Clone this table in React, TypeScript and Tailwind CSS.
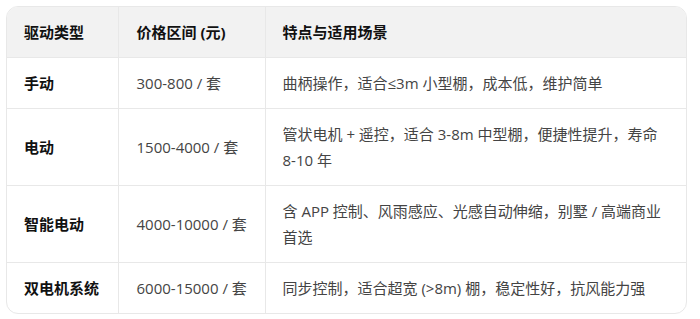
import React from 'react'

const ROWS = [
  { type: '手动', price: '300-800 / 套', desc: '曲柄操作，适合≤3m 小型棚，成本低，维护简单' },
  { type: '电动', price: '1500-4000 / 套', desc: '管状电机 + 遥控，适合 3-8m 中型棚，便捷性提升，寿命 8-10 年' },
  { type: '智能电动', price: '4000-10000 / 套', desc: '含 APP 控制、风雨感应、光感自动伸缩，别墅 / 高端商业首选' },
  { type: '双电机系统', price: '6000-15000 / 套', desc: '同步控制，适合超宽 (>8m) 棚，稳定性好，抗风能力强' },
]

export default function App() {
  return (
    <div
      className="w-[700px] h-[319px] bg-white pt-[6px] pl-[6px]"
      style={{ fontFamily: '"Open Sans", "Noto Sans CJK SC", sans-serif' }}
    >
      <div className="w-[681px] border border-[#e8e8e8] rounded-[12px] overflow-hidden">
        <table className="w-full table-fixed border-collapse text-[15px] leading-[26px]">
          <colgroup>
            <col className="w-[111px]" />
            <col className="w-[147px]" />
            <col />
          </colgroup>
          <thead>
            <tr className="bg-[#f2f2f2] text-[#111]">
              <th className="text-left font-bold pl-[17px] pr-[8px] py-[12px]">驱动类型</th>
              <th className="text-left font-bold pl-[18px] pr-[8px] py-[12px] border-l border-[#e8e8e8]">价格区间 (元)</th>
              <th className="text-left font-bold px-[17px] py-[12px] border-l border-[#e8e8e8]">特点与适用场景</th>
            </tr>
          </thead>
          <tbody>
            {ROWS.map(r => (
              <tr key={r.type} className="border-t border-[#e8e8e8]">
                <td className="pl-[17px] pr-[4px] py-[12px] font-bold text-[#111] whitespace-nowrap">{r.type}</td>
                <td className="pl-[18px] pr-[4px] py-[12px] text-[#444] border-l border-[#e8e8e8] whitespace-nowrap">{r.price}</td>
                <td className="px-[17px] py-[12px] text-[#444] border-l border-[#e8e8e8]">{r.desc}</td>
              </tr>
            ))}
          </tbody>
        </table>
      </div>
    </div>
  )
}
